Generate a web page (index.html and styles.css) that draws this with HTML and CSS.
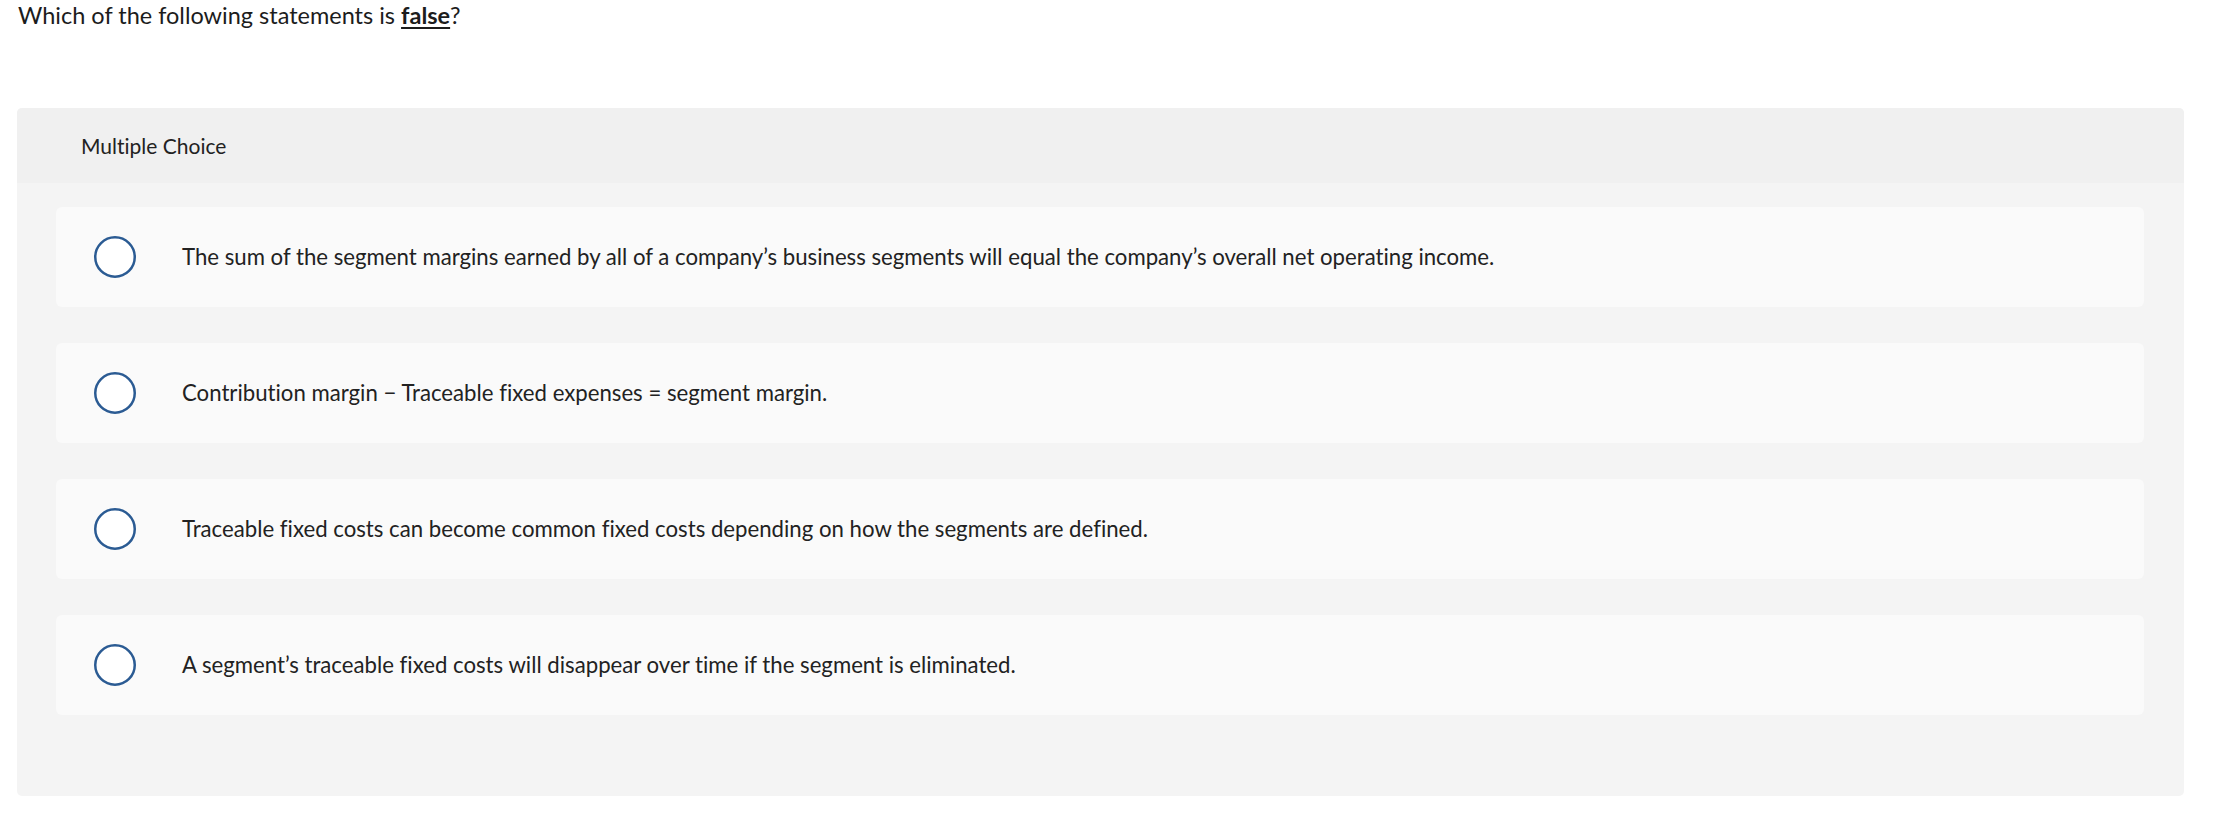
FILE: index.html
```html
<!DOCTYPE html>
<html lang="en">
<head>
<meta charset="utf-8">
<title>Multiple Choice</title>
<link rel="stylesheet" href="styles.css">
</head>
<body>
<p class="prompt">Which of the following statements is <strong class="key">false</strong>?</p>
<section class="mc">
  <header class="mc-head">Multiple Choice</header>
  <div class="mc-body">
    <label class="opt">
      <span class="radio"><svg width="42" height="42" viewBox="0 0 42 42"><circle cx="21" cy="21" r="19.75" fill="#fff" stroke="#2b5b93" stroke-width="2.5"/></svg></span>
      <span class="opt-text">The sum of the segment margins earned by all of a company’s business segments will equal the company’s overall net operating income.</span>
    </label>
    <label class="opt">
      <span class="radio"><svg width="42" height="42" viewBox="0 0 42 42"><circle cx="21" cy="21" r="19.75" fill="#fff" stroke="#2b5b93" stroke-width="2.5"/></svg></span>
      <span class="opt-text">Contribution margin − Traceable fixed expenses = segment margin.</span>
    </label>
    <label class="opt">
      <span class="radio"><svg width="42" height="42" viewBox="0 0 42 42"><circle cx="21" cy="21" r="19.75" fill="#fff" stroke="#2b5b93" stroke-width="2.5"/></svg></span>
      <span class="opt-text">Traceable fixed costs can become common fixed costs depending on how the segments are defined.</span>
    </label>
    <label class="opt">
      <span class="radio"><svg width="42" height="42" viewBox="0 0 42 42"><circle cx="21" cy="21" r="19.75" fill="#fff" stroke="#2b5b93" stroke-width="2.5"/></svg></span>
      <span class="opt-text">A segment’s traceable fixed costs will disappear over time if the segment is eliminated.</span>
    </label>
  </div>
</section>
</body>
</html>
```

FILE: styles.css
```css
* { box-sizing: border-box; }

html, body {
  margin: 0;
  padding: 0;
  background: #ffffff;
}

body {
  font-family: Lato, "Liberation Sans", sans-serif;
  font-size: 22px;
  line-height: 1.2;
  color: #222222;
  font-variant-ligatures: none;
}

.prompt {
  margin: 1px 0 0 18px;
  font-size: 23.5px;
  color: #1c1c1c;
}

.key {
  font-weight: 700;
  text-decoration: underline;
  text-underline-offset: 3px;
}

.mc {
  margin: 79px 40px 0 17px;
  border-radius: 5px;
  background: #f4f4f4;
  overflow: hidden;
}

.mc-head {
  display: flex;
  align-items: center;
  height: 75px;
  padding-left: 64px;
  background: #f0f0f0;
  color: #222222;
  font-size: 21px;
}

.mc-body {
  display: flex;
  flex-direction: column;
  gap: 36px;
  padding: 24px 40px 81px 39px;
}

.opt {
  display: flex;
  align-items: center;
  height: 100px;
  padding-left: 38px;
  background: #fafafa;
  border-radius: 6px;
  cursor: pointer;
}

.radio {
  display: flex;
  flex: 0 0 42px;
  width: 42px;
  height: 42px;
  margin-right: 46px;
}

.opt-text {
  color: #222222;
  font-size: 22.2px;
}
```
